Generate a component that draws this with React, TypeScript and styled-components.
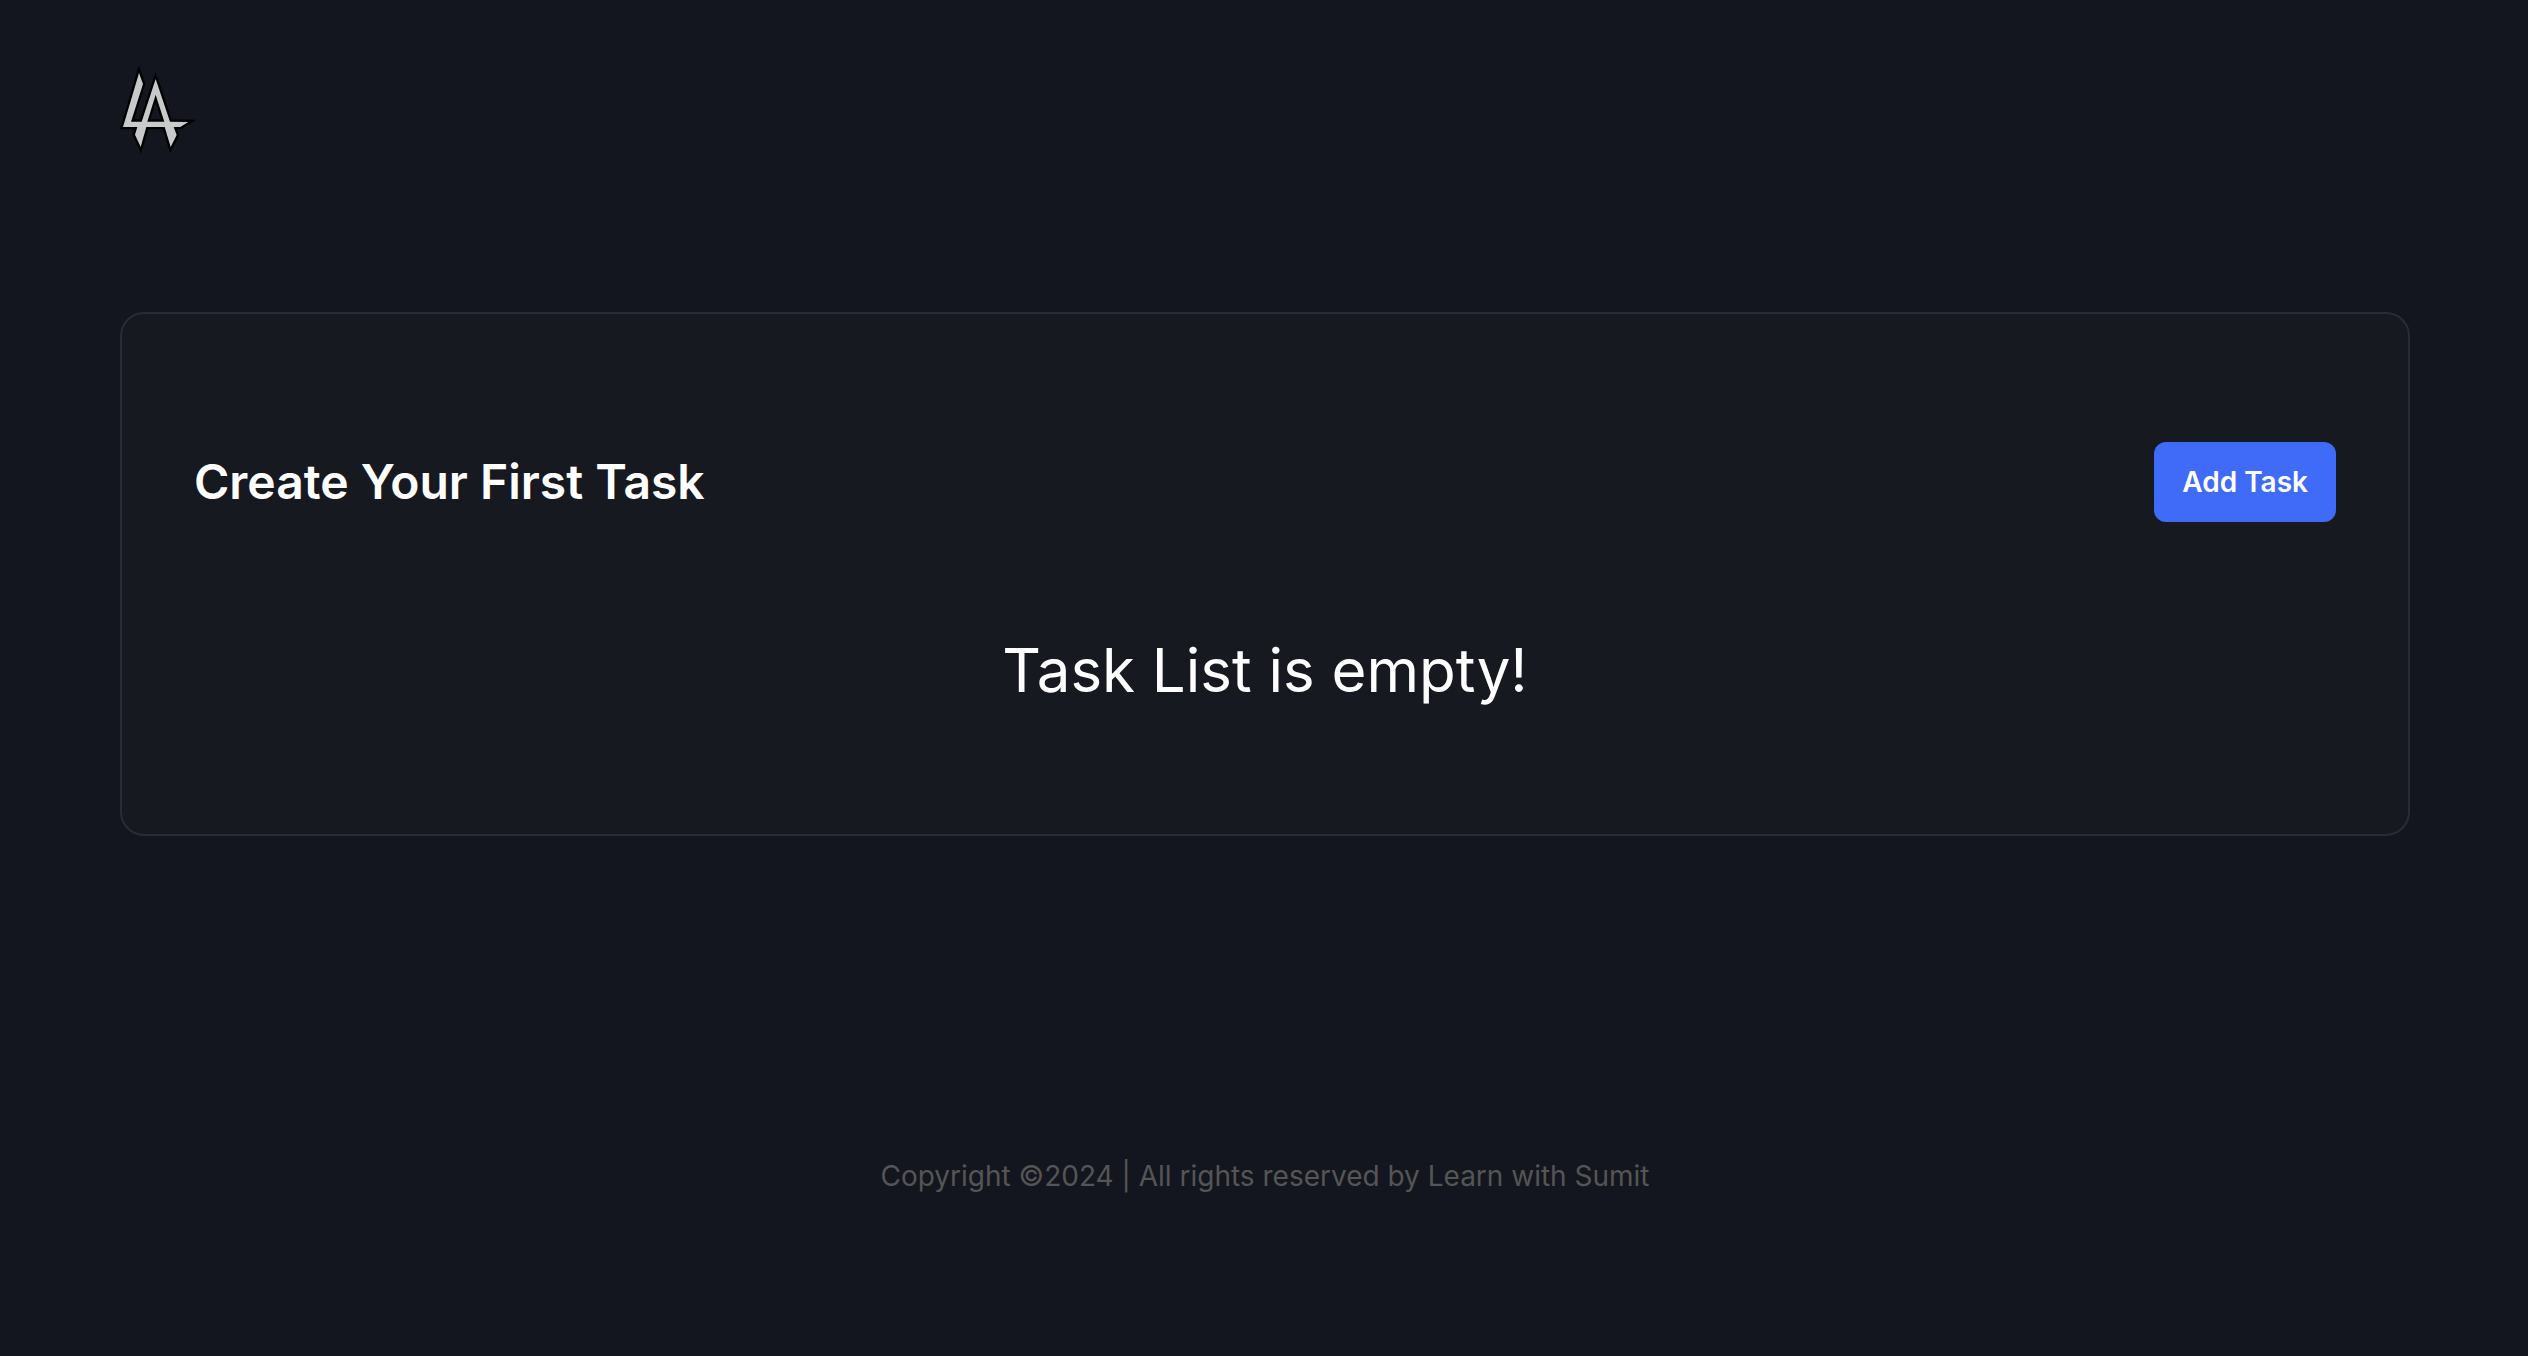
import React from "react";
import styled, { createGlobalStyle } from "styled-components";

const GlobalStyle = createGlobalStyle`
  *, *::before, *::after { box-sizing: border-box; }
  body {
    margin: 0;
    background: #13161e;
    color: #fff;
    font-family: Inter, "Liberation Sans", sans-serif;
  }
`;

const Page = styled.div`
  display: flex;
  flex-direction: column;
  min-height: 100vh;
  padding: 0 118px 0 120px;
`;

const Header = styled.header`
  display: flex;
  align-items: center;
  padding: 60px 0 152px;
`;

const HomeLink = styled.a`
  display: block;
`;

const LogoMark = styled.svg`
  display: block;
  width: 80px;
  height: 100px;
`;

const Card = styled.section`
  padding: 128px 72px;
  border: 2px solid #292c34;
  border-radius: 24px;
  background: #171920;
`;

const CardHeader = styled.div`
  display: flex;
  align-items: center;
  justify-content: space-between;
  margin-bottom: 112px;
`;

const Title = styled.h2`
  margin: 0;
  font-size: 48px;
  line-height: 60px;
  font-weight: 600;
`;

const AddButton = styled.button`
  padding: 20px 28px;
  border: 0;
  border-radius: 12px;
  background: #406bf8;
  color: #fff;
  font-family: inherit;
  font-size: 28px;
  line-height: 40px;
  font-weight: 600;
  cursor: pointer;
`;

const EmptyMessage = styled.p`
  margin: 0;
  font-size: 60px;
  line-height: 72px;
  text-align: center;
`;

const Footer = styled.footer`
  padding: 320px 0 160px;
  color: #555;
  font-size: 28px;
  line-height: 40px;
  text-align: center;
`;

function Logo() {
  return (
    <LogoMark viewBox="60 30 240 300" aria-hidden="true">
      <path
        d="M117 69 L129 102 L93 215 L125 215 L167 87 L210 215 L265 216 L241 231 L221 231 L230 255 L212 291 L194 231 L139 231 L122 291 L105 254 L112 231 L69 231 Z M167 134 L142 215 L193 215 Z"
        fill="#c8c9cb"
        fillRule="evenodd"
        stroke="#000"
        strokeWidth="14"
        strokeMiterlimit="6"
        paintOrder="stroke"
      />
    </LogoMark>
  );
}

export default function App() {
  return (
    <>
      <GlobalStyle />
      <Page>
        <Header>
          <HomeLink href="#" aria-label="Home">
            <Logo />
          </HomeLink>
        </Header>
        <main>
          <Card>
            <CardHeader>
              <Title>Create Your First Task</Title>
              <AddButton type="button">Add Task</AddButton>
            </CardHeader>
            <EmptyMessage>Task List is empty!</EmptyMessage>
          </Card>
        </main>
        <Footer>Copyright ©2024 | All rights reserved by Learn with Sumit</Footer>
      </Page>
    </>
  );
}
